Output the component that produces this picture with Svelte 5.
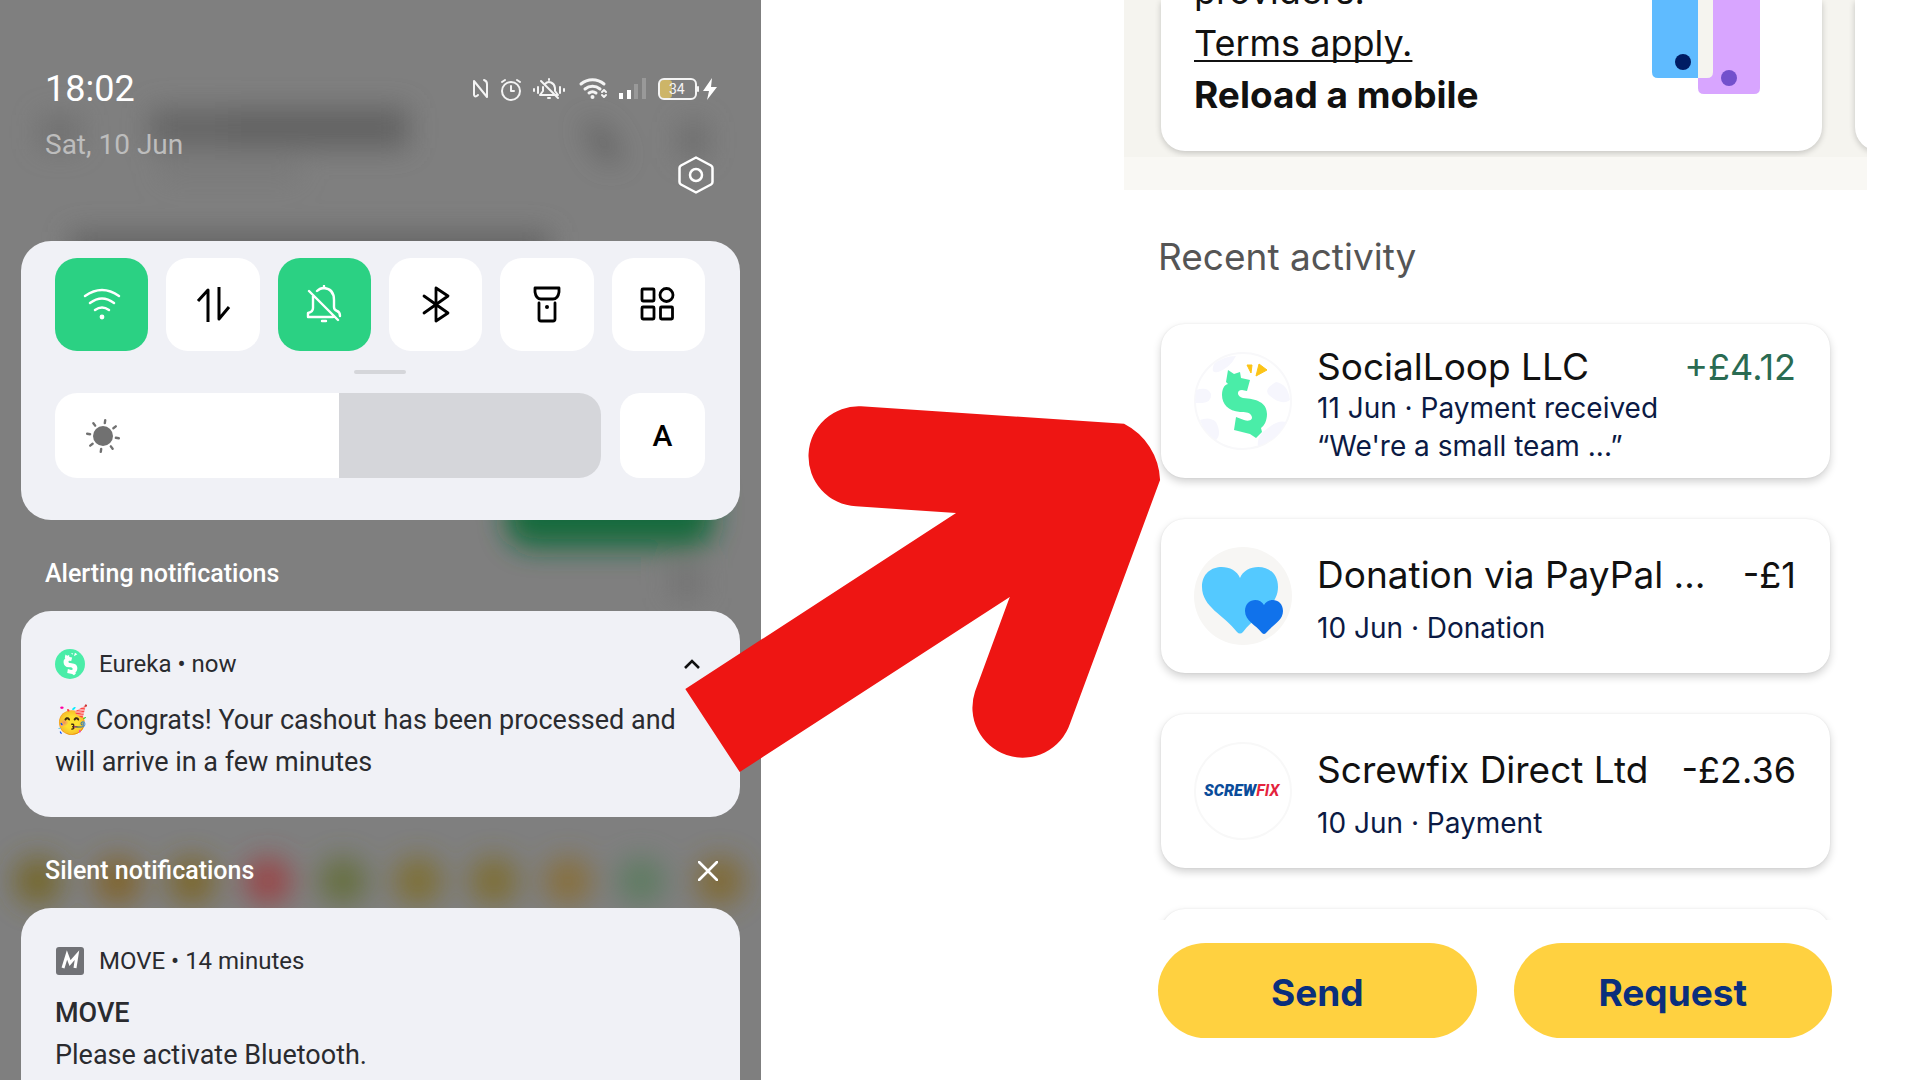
<script lang="ts">
    interface Activity {
        name: string;
        amount: string;
        incoming?: boolean;
        lines: string[];
        logo: "dollar" | "hearts" | "screwfix";
    }

    const activities: Activity[] = [
        {
            name: "SocialLoop LLC",
            amount: "+£4.12",
            incoming: true,
            lines: ["11 Jun · Payment received", "“We're a small team ...”"],
            logo: "dollar",
        },
        {
            name: "Donation via PayPal …",
            amount: "-£1",
            lines: ["10 Jun · Donation"],
            logo: "hearts",
        },
        {
            name: "Screwfix Direct Ltd",
            amount: "-£2.36",
            lines: ["10 Jun · Payment"],
            logo: "screwfix",
        },
    ];

    let tiles = $state([
        { id: "wifi", label: "Wi-Fi", on: true },
        { id: "data", label: "Mobile data", on: false },
        { id: "mute", label: "Mute", on: true },
        { id: "bluetooth", label: "Bluetooth", on: false },
        { id: "torch", label: "Torch", on: false },
        { id: "more", label: "More", on: false },
    ]);

    let brightness = $state(52);

    // blurred emoji row behind the shade
    const blobs = [
        { x: 38, color: "#75682f" },
        { x: 118, color: "#80652f" },
        { x: 192, color: "#7c682f" },
        { x: 268, color: "#984648" },
        { x: 343, color: "#667040" },
        { x: 418, color: "#7e7034" },
        { x: 494, color: "#7e6e36" },
        { x: 568, color: "#87703c" },
        { x: 641, color: "#5e7c62" },
        { x: 720, color: "#806a35" },
    ];
</script>

{#snippet dollar(color: string)}
    <path
        fill={color}
        d="M32 30L34 18L40 22L46 20L47 26L56 28L53 39L48 38C42 38 43 45 49 46C62 47 73 50 73 62C73 69 70 74 67 76L68 80L62 86L56 82L40 78L42 65L50 68C56 70 60 67 57 63C55 60 51 60 46 60C34 59 28 52 28 43C28 37 30 33 34 32Z"
    />
{/snippet}

<main>
    <section class="phone">
        <svg class="backdrop" viewBox="0 0 761 1080" preserveAspectRatio="none" aria-hidden="true">
            <defs>
                <filter id="soft" x="-50%" y="-50%" width="200%" height="200%">
                    <feGaussianBlur stdDeviation="14" />
                </filter>
            </defs>
            <g filter="url(#soft)">
                <rect x="150" y="108" width="90" height="40" fill="#666" />
                <rect x="228" y="108" width="180" height="40" fill="#626262" />
                <rect x="40" y="115" width="40" height="34" fill="#707070" />
                <rect x="160" y="165" width="140" height="14" fill="#777" />
                <rect x="70" y="232" width="480" height="40" fill="#656565" />
                <path d="M582 124L602 124L624 160L604 162Z" fill="#606060" />
                <rect x="680" y="122" width="26" height="36" fill="#6c6c6c" />
                <rect x="670" y="568" width="34" height="30" fill="#727272" />
                <rect x="506" y="470" width="208" height="78" rx="24" fill="#126a3c" />
                {#each blobs as blob}
                    <circle cx={blob.x} cy="881" r="24" fill={blob.color} />
                {/each}
            </g>
        </svg>

        <div class="status">
            <span class="time">18:02</span>
            <svg width="246" height="26" viewBox="472 76 246 26" fill="none" stroke="#f4f4f4" stroke-width="2" stroke-linecap="round" stroke-linejoin="round" role="img" aria-label="Status icons">
                <path d="M478 95Q475 98 474 95V81L487 97V84Q487 81 484 80" />
                <circle cx="511" cy="91" r="9" />
                <path d="M511 86V91H514M502 82L505 80M520 82L517 80" />
                <path d="M540 95H558L555 91V88A6 7 0 0 0 545 84M543 87V91L540 95M541 81L558 98M549 80V79M548 98H550" />
                <path d="M534 89V91M538 87V93M560 87V93M564 89V91" />
                <path d="M581 84A18 18 0 0 1 604 84M585 89A12 12 0 0 1 600 89M589 93A6 6 0 0 1 596 93" stroke-width="3" />
                <circle cx="592.500" cy="97" r="2" fill="#f4f4f4" stroke="none" />
                <path d="M602 92L604 90L606 92M602 95L604 97L606 95" />
                <g stroke="none" fill="#fff">
                    <rect x="619" y="93" width="4" height="6" />
                    <rect x="627" y="90" width="4" height="9" />
                    <rect x="634" y="84" width="4" height="15" fill="#999" />
                    <rect x="642" y="78" width="4" height="21" fill="#999" />
                    <rect x="660" y="80" width="12" height="18" rx="3" fill="#cdb568" />
                    <path d="M712 78L703 91H709L707 100L717 87H711Z" />
                </g>
                <rect x="659" y="79" width="37" height="20" rx="5" />
                <path d="M698 87V91" />
                <text x="669" y="94" class="charge">34</text>
            </svg>
        </div>
        <div class="dateline">
            <span class="date">Sat, 10 Jun</span>
            <button class="bare gear" aria-label="Settings">
                <svg width="38" height="38" viewBox="0 0 38 38" fill="none" stroke="#fff" stroke-width="2.500" stroke-linejoin="round">
                    <path d="M19 1.500L34 9.500Q35.500 10.500 35.500 12V26Q35.500 27.500 34 28.500L19 36.500L4 28.500Q2.500 27.500 2.500 26V12Q2.500 10.500 4 9.500Z" />
                    <circle cx="19" cy="19" r="6" />
                </svg>
            </button>
        </div>

        <div class="panel controls">
            <div class="tiles">
                {#each tiles as tile}
                    <button
                        class="tile"
                        class:on={tile.on}
                        aria-label={tile.label}
                        aria-pressed={tile.on}
                        onclick={() => (tile.on = !tile.on)}
                    >
                        <svg width="40" height="40" viewBox="0 0 40 40" fill="none" stroke="currentColor" stroke-width="2.400" stroke-linecap="round" stroke-linejoin="round">
                            {#if tile.id === "wifi"}
                                <path d="M3 11Q20 -1 37 11M8 18Q20 9 32 18M13 25Q20 20 27 25" />
                                <circle cx="20" cy="32" r="2.400" fill="currentColor" stroke="none" />
                            {:else if tile.id === "data"}
                                <path stroke-width="3" stroke-linecap="butt" d="M15 37V5L5 16M26 2V34L36 22" />
                            {:else if tile.id === "mute"}
                                <path d="M13 6Q16 3 20 3Q30 4 30 15V22Q30 25 33 26Q36 27 36 31M29 32H4V28Q9 27 9 23V11M20 3V1M5 6L34 35M18 36H22" />
                            {:else if tile.id === "bluetooth"}
                                <path stroke-width="2.800" d="M8 11L32 28L20 36V3L32 11L8 28" />
                            {:else if tile.id === "torch"}
                                <path stroke-width="2.800" d="M8 3H32V7Q31 14 26 14H14Q9 14 8 7ZM12 18V34Q12 36 14 36H26Q28 36 28 34V18" />
                                <circle cx="20" cy="22" r="2" fill="currentColor" stroke="none" />
                            {:else}
                                <g stroke-width="2.800">
                                    <rect x="4" y="4" width="12" height="12" rx="1" />
                                    <circle cx="28.500" cy="10" r="6.500" />
                                    <rect x="4" y="22" width="12" height="12" rx="1" />
                                    <rect x="22.500" y="22" width="12" height="12" rx="1" />
                                </g>
                            {/if}
                        </svg>
                    </button>
                {/each}
            </div>
            <div class="handle"></div>
            <div class="brightness">
                <div class="slider">
                    <input
                        type="range"
                        aria-label="Brightness"
                        bind:value={brightness}
                        style="--level: {brightness}%"
                    />
                    <svg width="36" height="36" viewBox="-18 -18 36 36" aria-hidden="true">
                        <circle r="10" fill="#717171" />
                        {#each [8, 53, 98, 143, 188, 233, 278, 323] as angle}
                            <path d="M0 -13V-16" stroke="#717171" stroke-width="2.400" transform="rotate({angle})" stroke-linecap="round" />
                        {/each}
                    </svg>
                </div>
                <button class="auto" aria-label="Automatic brightness">A</button>
            </div>
        </div>

        <div class="group">
            <h2>Alerting notifications</h2>
        </div>
        <article class="panel notice">
            <header>
                <svg width="30" height="30" viewBox="0 0 98 98" aria-hidden="true">
                    <circle cx="49" cy="49" r="49" fill="#4aeda8" />
                    {@render dollar("#fff")}
                    <path d="M53 13L58 13L57 20ZM65 12L73 17L62 24Z" fill="#fff" />
                </svg>
                <span>Eureka • now</span>
                <button class="bare chevron" aria-label="Collapse">
                    <svg width="16" height="12" viewBox="0 0 16 12" fill="none" stroke="#111" stroke-width="2.600">
                        <path d="M1 10L8 3L15 10" />
                    </svg>
                </button>
            </header>
            <p>🥳 Congrats! Your cashout has been processed and will arrive in a few minutes</p>
        </article>

        <div class="group">
            <h2>Silent notifications</h2>
            <button class="bare" aria-label="Clear silent notifications">
                <svg width="20" height="20" viewBox="0 0 20 20" stroke="#fff" stroke-width="2.600" stroke-linecap="round">
                    <path d="M1 1L19 19M19 1L1 19" />
                </svg>
            </button>
        </div>
        <article class="panel notice last">
            <header>
                <svg width="30" height="30" viewBox="0 0 30 30" aria-hidden="true">
                    <rect x="1" y="1" width="28" height="28" rx="3" fill="#717276" />
                    <path d="M8 22L12 9L15 17L22 9L20 22" fill="none" stroke="#fff" stroke-width="3" />
                </svg>
                <span>MOVE • 14 minutes</span>
            </header>
            <h3>MOVE</h3>
            <p>Please activate Bluetooth.</p>
        </article>
    </section>

    <section class="wallet">
        <div class="promos">
            <div class="promo">
                <div>
                    <p>providers.</p>
                    <p><a href="#terms">Terms apply.</a></p>
                    <p class="strong">Reload a mobile</p>
                </div>
                <svg width="108" height="96" viewBox="0 0 108 96" aria-hidden="true">
                    <path d="M46 0H108V88Q108 94 102 94H52Q46 94 46 88Z" fill="#d8a5ff" />
                    <path d="M46 0H61V72Q61 78 55 78H46Z" fill="#f5f4ef" />
                    <path d="M0 0H46V78H6Q0 78 0 72Z" fill="#5fbbff" />
                    <circle cx="31" cy="62" r="8" fill="#001c64" />
                    <circle cx="77" cy="78" r="8" fill="#7350cc" />
                </svg>
            </div>
            <div class="promo"></div>
        </div>
        <div class="strip"></div>

        <div class="feed">
            <h2>Recent activity</h2>
            {#each activities as item}
                <article class="card">
                    <svg width="98" height="98" viewBox="0 0 98 98" aria-hidden="true">
                        {#if item.logo === "dollar"}
                            <circle cx="49" cy="49" r="48" fill="#fff" stroke="#f8f8fa" stroke-width="2" />
                            <path d="M20 12Q30 4 42 4Q36 16 24 20Q16 22 20 12ZM2 38Q14 34 17 42Q18 50 8 51H1ZM82 30Q94 32 96 48Q88 54 76 44Q68 38 82 30ZM6 68Q16 64 22 70Q28 82 22 88Q10 80 6 68ZM74 76Q84 68 92 70Q84 88 64 94Q62 84 74 76Z" fill="#f6f6fd" />
                            {@render dollar("#4aeda8")}
                            <path d="M53 13L58 13L57 21ZM65 12L73 18L62 24Z" fill="#fcc417" stroke="#fcc417" stroke-linejoin="round" />
                        {:else if item.logo === "hearts"}
                            <circle cx="49" cy="49" r="49" fill="#f7f6f4" />
                            <path d="M46 31C40 15 8 15 8 40C8 60 30 68 43 85Q46 88 49 85C62 68 84 60 84 40C84 15 52 15 46 31Z" fill="#54c9ff" />
                            <path d="M70 58C66 50 51 51 51 64C51 74 62 78 68 86Q70 88 72 86C78 78 89 74 89 64C89 51 74 50 70 58Z" fill="#1072eb" />
                        {:else}
                            <circle cx="49" cy="49" r="48" fill="#fff" stroke="#f8f8f8" stroke-width="2" />
                            <text x="10" y="54" class="brand"><tspan fill="#0a4c9a">SCREW</tspan><tspan fill="#e4243d" class="fix">FIX</tspan></text>
                        {/if}
                    </svg>
                    <div class="details" class:roomy={item.lines.length === 1}>
                        <div class="top">
                            <h3>{item.name}</h3>
                            <span class:incoming={item.incoming}>{item.amount}</span>
                        </div>
                        {#each item.lines as line}
                            <p>{line}</p>
                        {/each}
                    </div>
                </article>
            {/each}
            <article class="card"></article>
        </div>

        <div class="actions">
            <button>Send</button>
            <button>Request</button>
        </div>
    </section>

    <svg class="arrow" viewBox="684 405 478 368" aria-hidden="true">
        <path
            fill="#ee1513"
            d="M685.300 689L956 513L856 506.300A50 50 0 0 1 861 406.300L1124 423.700A66 66 0 0 1 1160 480L1070 723.500A50 50 0 0 1 975 691.500L1009.700 597L739.700 772Z"
        />
    </svg>
</main>

<style>
    :global(body) {
        margin: 0;
        background: #fff;
    }

    main {
        position: relative;
        display: grid;
        grid-template-columns: 761fr 363fr 743fr 53fr;
        height: 100vh;
        overflow: hidden;
    }

    h2,
    h3,
    p {
        margin: 0;
        font-weight: 400;
    }

    button {
        border: 0;
        padding: 0;
        cursor: pointer;
    }

    .bare {
        background: none;
        display: flex;
    }

    svg {
        flex: none;
    }

    .phone {
        position: relative;
        display: flex;
        flex-direction: column;
        min-height: 0;
        padding: 65px 21px 0;
        overflow: hidden;
        background: #7f7f7f;
        font-family: Roboto, sans-serif;
    }

    .phone > * {
        position: relative;
    }

    .phone > .backdrop {
        position: absolute;
        inset: 0;
        width: 100%;
        height: 100%;
    }

    .status,
    .dateline,
    .group {
        display: flex;
        justify-content: space-between;
        padding: 0 22px 0 24px;
        color: #fff;
    }

    .status {
        align-items: center;
        line-height: 48px;
    }

    .time {
        font-size: 36px;
    }

    .charge {
        fill: #f4f4f4;
        stroke: none;
        font-size: 14px;
    }

    .date {
        margin-top: 14px;
        font-size: 28px;
        line-height: 36px;
        color: #bdbdbd;
    }

    .gear {
        margin: 43px 3px 0 0;
    }

    .panel {
        border-radius: 30px;
        background: #f0f1f6;
        color: #2a2b2f;
    }

    .controls {
        margin-top: 47px;
        padding: 17px 35px 42px 34px;
    }

    .tiles {
        display: grid;
        grid-template-columns: repeat(6, 1fr);
        gap: 18px;
    }

    .tile {
        display: flex;
        align-items: center;
        justify-content: center;
        height: 93px;
        border-radius: 22px;
        background: #fff;
        color: #000;
    }

    .tile.on {
        background: #2bd183;
        color: #fff;
    }

    .handle {
        width: 52px;
        height: 4px;
        margin: 19px auto;
        border-radius: 2px;
        background: #d5d6da;
    }

    .brightness {
        display: flex;
        gap: 19px;
    }

    .slider {
        position: relative;
        flex: 1;
        display: flex;
    }

    .slider input {
        appearance: none;
        width: 100%;
        height: 85px;
        margin: 0;
        border-radius: 22px;
        background: linear-gradient(to right, #fff var(--level), #d5d6da var(--level));
    }

    .slider input::-webkit-slider-thumb {
        appearance: none;
        width: 24px;
        height: 85px;
        background: transparent;
    }

    .slider svg {
        position: absolute;
        left: 30px;
        top: 25px;
        pointer-events: none;
    }

    .auto {
        width: 85px;
        border-radius: 20px;
        background: #fff;
        color: #000;
        font: 500 30px Roboto, sans-serif;
    }

    .group {
        align-items: center;
        margin: 38px 0 21px;
    }

    .group h2 {
        font-size: 25px;
        font-weight: 500;
        line-height: 32px;
    }

    .notice {
        padding: 38px 34px 34px;
    }

    .notice.last {
        flex: 1;
        border-radius: 30px 30px 0 0;
        padding-bottom: 0;
    }

    .notice header {
        display: flex;
        align-items: center;
        gap: 14px;
        margin-bottom: 20px;
        font-size: 24px;
        line-height: 30px;
    }

    .last header {
        margin-bottom: 16px;
    }

    .chevron {
        margin: 0 6px 0 auto;
    }

    .notice h3,
    .notice p {
        font-size: 27px;
        line-height: 42px;
    }

    .notice h3 {
        font-weight: 500;
    }

    .wallet {
        grid-column: 3;
        display: flex;
        flex-direction: column;
        min-width: 0;
        min-height: 0;
        font-family: Inter, sans-serif;
    }

    .promos {
        display: flex;
        gap: 33px;
        height: 151px;
        padding: 0 0 6px 37px;
        overflow: hidden;
        background: #f5f4ef;
    }

    .promo {
        flex: none;
        box-sizing: border-box;
        display: flex;
        align-items: flex-end;
        justify-content: space-between;
        width: calc(100% - 45px);
        height: 151px;
        padding: 0 62px 30px 33px;
        border-radius: 0 0 24px 24px;
        background: #fff;
        box-shadow: 0 2px 6px rgba(0, 0, 0, 0.2);
        font-size: 36px;
        line-height: 52px;
        color: #111;
    }

    .promo svg {
        align-self: flex-start;
    }

    .promo a {
        color: inherit;
        text-decoration-thickness: 2px;
        text-underline-offset: 4px;
        text-decoration-skip-ink: none;
    }

    .strong {
        font-size: 37px;
        font-weight: 700;
    }

    .strip {
        flex: none;
        height: 33px;
        background: #f9f8f4;
    }

    .feed {
        flex: 1;
        display: flex;
        flex-direction: column;
        gap: 41px;
        min-height: 0;
        padding: 45px 37px 0;
        overflow: hidden;
    }

    .feed h2 {
        margin: 0 0 4px -3px;
        font-size: 37px;
        line-height: 44px;
        color: #555;
    }

    .card {
        flex: none;
        box-sizing: border-box;
        display: flex;
        align-items: center;
        gap: 25px;
        min-height: 154px;
        padding: 0 34px 0 33px;
        border-radius: 24px;
        background: #fff;
        box-shadow:
            0 0 2px rgba(0, 0, 0, 0.08),
            0 4px 8px rgba(0, 0, 0, 0.18);
    }

    .details {
        flex: 1;
        min-width: 0;
        padding-top: 7px;
        color: #0b1a44;
    }

    .details p {
        font-size: 28px;
        line-height: 38px;
    }

    .top {
        display: flex;
        justify-content: space-between;
        font-size: 36px;
        line-height: 44px;
        color: #111;
        white-space: nowrap;
    }

    .top h3 {
        font-size: 37px;
    }

    .roomy .top {
        margin-bottom: 12px;
    }

    .incoming {
        color: #2a6b52;
    }

    .brand {
        font: italic 900 16px Roboto, sans-serif;
    }

    .fix {
        font-weight: 700;
    }

    .actions {
        flex: none;
        display: flex;
        gap: 37px;
        padding: 23px 35px 42px 34px;
    }

    .actions button {
        flex: 1;
        height: 95px;
        padding-top: 4px;
        border-radius: 48px;
        background: #ffd140;
        color: #0a2f7c;
        font: 700 37px Inter, sans-serif;
    }

    .arrow {
        position: absolute;
        left: 35.6%;
        top: 405px;
        width: 24.9%;
    }
</style>
